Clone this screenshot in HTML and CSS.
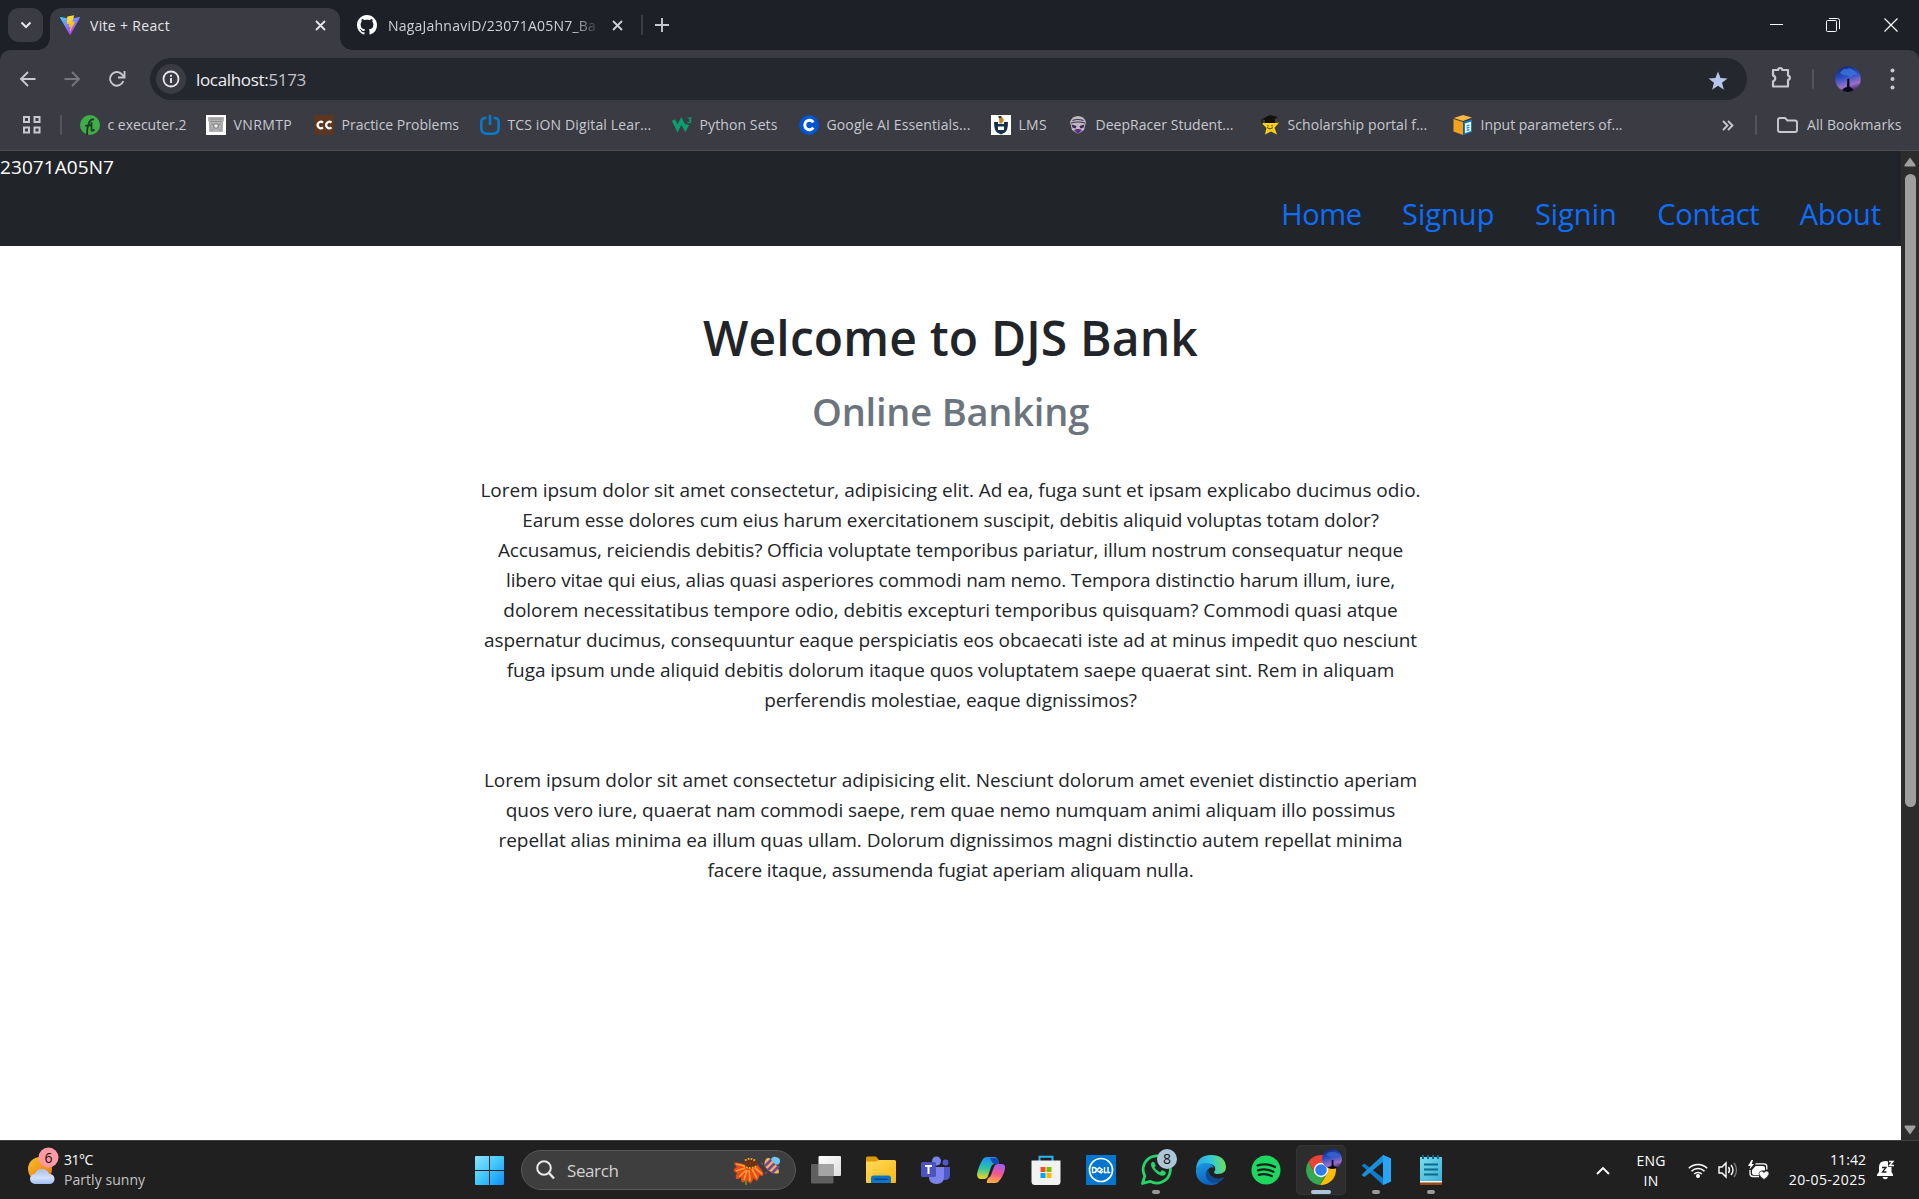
FILE: index.html
```html
<!DOCTYPE html>
<html lang="en">
<head>
<meta charset="utf-8">
<title>Vite + React</title>
<link rel="stylesheet" href="styles.css">
</head>
<body>
<div class="tabstrip">
  <div class="tab-search"><svg width="12" height="8" viewBox="0 0 12 8"><path d="M1.500 1.500 6 6l4.500-4.500" fill="none" stroke="#e6e6e8" stroke-width="2"/></svg></div>
  <div class="tab active">
    <svg width="20" height="20" viewBox="0 0 20 20"><defs><linearGradient id="va" x1="0" y1="0" x2=".6" y2="1"><stop offset="0" stop-color="#41d1ff"/><stop offset="1" stop-color="#bd34fe"/></linearGradient><linearGradient id="vb" x1=".4" y1="0" x2=".6" y2="1"><stop offset="0" stop-color="#ffea83"/><stop offset=".1" stop-color="#ffdd35"/><stop offset="1" stop-color="#ffa800"/></linearGradient></defs><path d="M19.800 3 10.600 19.500a.6.6 0 0 1-1 0L.2 3a.6.6 0 0 1 .6-.9l9.200 1.700 9.200-1.700a.6.6 0 0 1 .6.900z" fill="url(#va)"/><path d="m14.300.2-6.800 1.300a.3.300 0 0 0-.2.300l-.4 7c0 .2.200.3.300.3l1.900-.4c.2 0 .3.100.3.300l-.6 2.700c0 .2.100.4.300.3l1.200-.3c.2-.1.400.1.300.3l-.9 4.300c0 .3.300.4.500.2l4.700-9.500c.1-.2-.1-.4-.3-.4l-1.900.4c-.2 0-.3-.1-.3-.3l1.200-4.300z" fill="url(#vb)"/></svg>
    <span class="tab-title first">Vite + React</span>
    <svg class="x" width="11" height="11" viewBox="0 0 11 11"><path d="m1 1 9 9m0-9-9 9" stroke="#e6e6e8" stroke-width="1.800"/></svg>
  </div>
  <div class="tab">
    <svg width="20" height="20" viewBox="0 0 16 16"><path fill="#fff" d="M8 0C3.580 0 0 3.580 0 8c0 3.540 2.290 6.530 5.470 7.590.4.070.55-.17.55-.38 0-.19-.01-.82-.01-1.490-2.010.37-2.530-.49-2.690-.94-.09-.23-.48-.94-.82-1.130-.28-.15-.68-.52-.01-.53.63-.01 1.080.58 1.230.82.72 1.210 1.870.87 2.330.66.070-.52.28-.87.51-1.070-1.780-.2-3.640-.89-3.640-3.950 0-.87.31-1.590.82-2.150-.08-.2-.36-1.020.08-2.120 0 0 .67-.21 2.200.82.64-.18 1.320-.27 2-.27s1.360.09 2 .27c1.530-1.040 2.200-.82 2.200-.82.44 1.100.16 1.920.08 2.120.51.56.82 1.270.82 2.150 0 3.070-1.870 3.750-3.650 3.950.29.25.54.73.54 1.480 0 1.070-.01 1.930-.01 2.200 0 .21.15.46.55.38A8.010 8.010 0 0 0 16 8c0-4.420-3.580-8-8-8z"/></svg>
    <span class="tab-title second">NagaJahnaviD/23071A05N7_Ba</span>
    <svg class="x" width="11" height="11" viewBox="0 0 11 11"><path d="m1 1 9 9m0-9-9 9" stroke="#d0d0d4" stroke-width="1.800"/></svg>
  </div>
  <i class="tab-sep"></i>
  <svg class="plus" width="14" height="14" viewBox="0 0 14 14"><path d="M7 0v14M0 7h14" stroke="#c7c8d0" stroke-width="1.900"/></svg>
  <div class="win">
    <svg width="14" height="14" viewBox="0 0 14 14"><path d="M0 6.500h13" stroke="#fff" stroke-width="1"/></svg>
    <svg width="14" height="14" viewBox="0 0 14 14"><g fill="none" stroke="#fff"><rect x=".5" y="2.500" width="10" height="11" rx="1"/><path d="M3 .5h8.500a2 2 0 0 1 2 2V11"/></g></svg>
    <svg width="14" height="14" viewBox="0 0 14 14"><path d="m.5.5 13 13m0-13-13 13" stroke="#fff" stroke-width="1.200"/></svg>
  </div>
</div>

<div class="toolbar-wrap">
  <div class="toolbar">
    <svg class="t-back" width="20" height="20" viewBox="0 0 20 20"><path d="M17.500 10H3m7-7-7 7 7 7" fill="none" stroke="#c7c8d0" stroke-width="1.900"/></svg>
    <svg class="t-fwd" width="20" height="20" viewBox="0 0 20 20"><path d="M2.500 10H17m-7-7 7 7-7 7" fill="none" stroke="#75767f" stroke-width="1.900"/></svg>
    <svg class="t-load" width="20" height="20" viewBox="0 0 20 20"><path d="M16.300 12A6.800 6.800 0 1 1 15 5.400l1.800 2" fill="none" stroke="#c7c8d0" stroke-width="1.900"/><path d="M17.500 2v6.500H11" fill="none" stroke="#c7c8d0" stroke-width="1.900"/></svg>
    <div class="omnibox">
      <span class="chip"><svg width="18" height="18" viewBox="0 0 18 18"><circle cx="9" cy="9" r="7.500" fill="none" stroke="#e6e6e8" stroke-width="1.800"/><path d="M9 8v5M9 4.800v2" stroke="#e6e6e8" stroke-width="1.900"/></svg></span>
      <span class="url"><b>localhost:</b>5173</span>
      <svg class="star" width="20" height="20" viewBox="0 0 20 20"><path fill="#b6c6ea" d="m10 .5 2.500 6.600 7 .3-5.500 4.400 1.900 6.900L10 14.800l-5.900 3.900L6 11.800.5 7.400l7-.3z"/></svg>
    </div>
    <svg class="ext" width="23" height="24" viewBox="0 0 23 24"><path d="M3 5h5.200a2 2 0 0 1 4 0H18v5.500a2.300 2.300 0 0 1 0 4.500v6.500H3v-5.300a3 3 0 0 0 0-5.800z" fill="none" stroke="#c7c8d0" stroke-width="2.200" stroke-linejoin="round"/></svg>
    <i class="sep"></i>
    <svg class="avatar" width="26" height="26" viewBox="0 0 26 26"><defs><linearGradient id="av" x1=".3" y1="0" x2=".6" y2="1"><stop offset="0" stop-color="#10257a"/><stop offset=".4" stop-color="#2a50c4"/><stop offset=".75" stop-color="#9a70c8"/><stop offset="1" stop-color="#3a2060"/></linearGradient></defs><circle cx="13" cy="13" r="12.800" fill="url(#av)"/><path d="M5 7q3-5 7-4 3-2 6 1 4 2 4 5-4-1-5 1-4 2-5-1-4 1-7-2z" fill="#3f7ce6" opacity=".7"/><path d="M7 24q3-3 5-3l.3-8 2-.5.3 8.500q2 0 4 3-6 4-11.600 0z" fill="#0a0818"/></svg>
    <svg class="dots" width="5" height="22" viewBox="0 0 5 22"><g fill="#c7c8d0"><circle cx="2.500" cy="2.500" r="2"/><circle cx="2.500" cy="11" r="2"/><circle cx="2.500" cy="19.500" r="2"/></g></svg>
  </div>
  <div class="bookmarks">
    <svg class="apps" width="20" height="20" viewBox="0 0 20 20"><g fill="none" stroke="#c7c8d0" stroke-width="2"><path d="M2 2h5v5H2zM12.500 2h5v5h-5zM2 12.500h5v5H2zM12.500 12.500h5v5h-5z"/></g></svg>
    <i class="sep"></i>
    <div class="marks">
      <div class="bm"><svg width="20" height="20" viewBox="0 0 20 20"><circle cx="10" cy="10" r="10" fill="#3fae49"/><path d="M7 20q0-7 1.500-11 1.500-5 5.500-4.500M5 10.500q4 1 7-1.500M11.500 7v8q0 2 3-.5" stroke="#1d3a25" stroke-width="1.800" fill="none"/></svg><span>c executer.2</span></div>
      <div class="bm"><svg width="20" height="20" viewBox="0 0 20 20"><path d="M0 0h20v20H0z" fill="#fff"/><path d="M2 2h16v4l-1 1v10H3V7L2 6z" fill="#b4b4b4"/><path d="M4 4h12M4 6.500h12M5 9h2v6H5zM13 9h2v6h-2z" stroke="#8a8a8a" fill="#ddd"/><circle cx="10" cy="11" r="2.300" fill="#eee" stroke="#777"/></svg><span>VNRMTP</span></div>
      <div class="bm"><svg width="20" height="20" viewBox="0 0 20 20"><path d="M0 0h20v20H0z" fill="#5b3620"/><path d="M9 7.600A3.200 3.200 0 1 0 9 12.400M17.500 7.600a3.200 3.200 0 1 0 0 4.800" fill="none" stroke="#fff" stroke-width="2.200"/></svg><span>Practice Problems</span></div>
      <div class="bm"><svg width="20" height="20" viewBox="0 0 20 20"><path d="M6.500 3H5.500Q1.300 3 1.300 7v6q0 5.700 5.700 5.700h6q5.700 0 5.700-5.700V7q0-4-4.200-4h-1" fill="none" stroke="#0a79c8" stroke-width="2.600"/><path d="M10 0v10" stroke="#0a79c8" stroke-width="2.600"/></svg><span>TCS iON Digital Lear...</span></div>
      <div class="bm"><svg width="20" height="20" viewBox="0 0 20 20"><path d="M1.500 5 5.500 13.500 9.300 6l4 7.500 2.200-4" fill="none" stroke="#0aa06e" stroke-width="3.600"/><path d="M15.500 3H19l-1.500 2q2 .3 1 2-1 1-3 .3" fill="none" stroke="#0aa06e" stroke-width="1.200"/></svg><span>Python Sets</span></div>
      <div class="bm"><svg width="20" height="20" viewBox="0 0 20 20"><circle cx="10" cy="10" r="10" fill="#0056d2"/><path d="M14.300 7.300a4.700 4.700 0 1 0 0 5.400" fill="none" stroke="#fff" stroke-width="3"/></svg><span>Google AI Essentials...</span></div>
      <div class="bm"><svg width="20" height="20" viewBox="0 0 20 20"><path d="M0 0h20v20H0z" fill="#fff"/><path d="M3 7h4v2h6V7h4q0 8-3 10.500L10 19.500l-4-2Q3 15 3 7z" fill="#18304e"/><path d="M7 11.500h6V15H7z" fill="#fff"/><path d="m8 3 3-1 2 3-2 3.500H8.500z" fill="#c5841d"/><path d="M7.500 1h3v2h-3z" fill="#29384a"/></svg><span>LMS</span></div>
      <div class="bm"><svg width="20" height="20" viewBox="0 0 20 20"><path d="M2 7q2-6 8-6t8 6l-2 8-6 4-6-4z" fill="#bcb7c2"/><path d="M4.500 5.500q5-2 11 0M3 8q7-2 14 0" stroke="#40304f" stroke-width="1.200" fill="none"/><path d="m3.500 9.500 5 1.500-1 2.500-3-1zM16.500 9.500l-5 1.500 1 2.500 3-1z" fill="#3c2453"/><path d="M6 15l3-1h2l3 1-4 4z" fill="#5d2d87"/></svg><span>DeepRacer Student...</span></div>
      <div class="bm"><svg width="20" height="20" viewBox="0 0 20 20"><path d="m10 3 2.500 5 6.500-.3-4.500 5 2.500 6.800-6-3-6 3 1.500-6.500-5-5L8 8z" fill="#fcd116"/><path d="m2 4 8-4 8 2-8 5zM5 4.500h10V8H5z" fill="#14110d"/><path d="M2 4v5" stroke="#14110d"/><path d="M8 10v1.500m4-1.500v1.500m-5 1q3 3 6 0" stroke="#493b00" fill="none"/></svg><span>Scholarship portal f...</span></div>
      <div class="bm"><svg width="20" height="20" viewBox="0 0 20 20"><path d="m.5 4 9.500 3v13L.5 16.500z" fill="#f5a31c"/><path d="m10 0 9 2.500L10 6 .8 3z" fill="#f9b941"/><path d="m10.500 7 8.500-2.500V17l-8.500 3z" fill="#0d7fc4"/><path d="m12 8.500 6-1.800v9.200l-6 2.200z" fill="#fff"/><path d="m13.500 11 3-.8m-3 3 3-.8m-3 3 3-.8" stroke="#0d7fc4" stroke-width="1.200"/></svg><span>Input parameters of...</span></div>
    </div>
    <svg class="more" width="12" height="11" viewBox="0 0 12 11"><path d="m1 1 4.500 4.500L1 10m5-9 4.500 4.500L6 10" fill="none" stroke="#c7c8d0" stroke-width="1.800"/></svg>
    <i class="sep s2"></i>
    <svg class="folder" width="21" height="16" viewBox="0 0 21 16"><path d="M1 3q0-2 2-2h5l2.500 2.500H18q2 0 2 2V13q0 2-2 2H3q-2 0-2-2z" fill="none" stroke="#c7c8d0" stroke-width="1.900"/></svg>
    <span class="all">All Bookmarks</span>
  </div>
</div>

<div class="viewport">
  <div class="page">
    <header>
      <div class="roll">23071A05N7</div>
      <nav><a class="n1">Home</a><a class="n2">Signup</a><a class="n3">Signin</a><a class="n4">Contact</a><a class="n5">About</a></nav>
    </header>
    <main>
      <h1>Welcome to DJS Bank</h1>
      <h2>Online Banking</h2>
      <p class="p1">
        <span>Lorem ipsum dolor sit amet consectetur, adipisicing elit. Ad ea, fuga sunt et ipsam explicabo ducimus odio.</span>
        <span>Earum esse dolores cum eius harum exercitationem suscipit, debitis aliquid voluptas totam dolor?</span>
        <span>Accusamus, reiciendis debitis? Officia voluptate temporibus pariatur, illum nostrum consequatur neque</span>
        <span>libero vitae qui eius, alias quasi asperiores commodi nam nemo. Tempora distinctio harum illum, iure,</span>
        <span>dolorem necessitatibus tempore odio, debitis excepturi temporibus quisquam? Commodi quasi atque</span>
        <span>aspernatur ducimus, consequuntur eaque perspiciatis eos obcaecati iste ad at minus impedit quo nesciunt</span>
        <span>fuga ipsum unde aliquid debitis dolorum itaque quos voluptatem saepe quaerat sint. Rem in aliquam</span>
        <span>perferendis molestiae, eaque dignissimos?</span>
      </p>
      <p class="p2">
        <span>Lorem ipsum dolor sit amet consectetur adipisicing elit. Nesciunt dolorum amet eveniet distinctio aperiam</span>
        <span>quos vero iure, quaerat nam commodi saepe, rem quae nemo numquam animi aliquam illo possimus</span>
        <span>repellat alias minima ea illum quas ullam. Dolorum dignissimos magni distinctio autem repellat minima</span>
        <span>facere itaque, assumenda fugiat aperiam aliquam nulla.</span>
      </p>
    </main>
  </div>
  <div class="scrollbar">
    <svg width="12" height="10" viewBox="0 0 12 10"><path d="M6 .5 11.500 8q.5 1.500-1 1.500h-9Q0 9.500.5 8z" fill="#9f9f9f"/></svg>
    <i class="thumb"></i>
    <svg class="down" width="12" height="10" viewBox="0 0 12 10"><path d="M6 9.500.5 2Q0 .5 1.500.5h9q1.500 0 1 1.500z" fill="#9f9f9f"/></svg>
  </div>
</div>

<div class="taskbar">
  <div class="weather">
    <svg width="34" height="38" viewBox="0 0 34 38"><defs><linearGradient id="su" x1="0" y1="0" x2="1" y2="1"><stop offset="0" stop-color="#f5c02c"/><stop offset="1" stop-color="#f0700c"/></linearGradient><linearGradient id="cl" x1="0" y1="0" x2="0" y2="1"><stop offset="0" stop-color="#a9c0ee"/><stop offset=".6" stop-color="#d2e0fa"/><stop offset="1" stop-color="#9fbcf0"/></linearGradient></defs><circle cx="12" cy="22" r="12" fill="url(#su)"/><path d="M7 37a5 5 0 0 1 0-10q1.500-5 7-5t7 5a5 5 0 0 1 1 10z" fill="url(#cl)"/><circle cx="20.500" cy="10.500" r="10" fill="#ff99a4"/><text x="20.500" y="15.500" text-anchor="middle" font-size="14" fill="#111">6</text></svg>
    <div class="wt"><span class="deg">31°C</span><span class="desc">Partly sunny</span></div>
  </div>
  <div class="dock">
    <svg class="start" width="29" height="29" viewBox="0 0 29 29"><defs><linearGradient id="wn" gradientUnits="userSpaceOnUse" x1="0" y1="0" x2="29" y2="29"><stop offset="0" stop-color="#8fe3ff"/><stop offset=".5" stop-color="#41c6fb"/><stop offset="1" stop-color="#0a8ffa"/></linearGradient></defs><path fill="url(#wn)" d="M1 0h13v14H0V1q0-1 1-1zM15 0h13q1 0 1 1v13H15zM0 15h14v14H1q-1 0-1-1zM15 15h14v13q0 1-1 1H15z"/></svg>
    <div class="search">
      <svg width="19" height="20" viewBox="0 0 19 20"><circle cx="8" cy="8" r="6.800" fill="none" stroke="#e8e8e8" stroke-width="2"/><path d="m13 13 5 5.500" stroke="#e8e8e8" stroke-width="2.400"/></svg>
      <span>Search</span>
      <svg class="flower" width="48" height="30" viewBox="0 0 48 30"><path d="M13 22v7" stroke="#5e8a1e" stroke-width="2.200"/><path d="M1 6.500q4-.5 9 1.500l14 0 4 5q3 4 2 7-2 0-3.500-1-.5 4-2.500 6-2.500-1-3.500-3-1 4-3 5.500-3-1-4-4-2 3-4.500 3-1.500-2-1-5-3 2-5 1.500Q2 20 4 17q-3-.5-3.500-3Q2 11 4 11 1 9 1 6.500z" fill="#ea4c16"/><path d="M12 10 3 8m9 4-9 3m10-1-7 7m8-7-3 10m5-10 1 11m2-12 5 9m-3-11 8 7" stroke="#ff9a38" stroke-width="1.700"/><ellipse cx="17.500" cy="7.500" rx="7" ry="5" fill="#6d3313"/><path d="M10.500 9.500q6 5 14 0M12 4.500q5-3.500 10 0" fill="none" stroke="#f2b11e" stroke-width="1.800" stroke-dasharray="1.700 1.300"/><path d="M33 3q3-3 8 3t5 11q-5 2-11-3t-2-11z" fill="#f7b551"/><path d="m32 10 7-7M35 14l8-8M39 17l7-7" stroke="#73479b" stroke-width="2.600"/><path d="M38 4q1-4 5-3 5 1 4 5t-5 2z" fill="#6fc7f3"/><path d="m30 8-2-1m6 9-2 2" stroke="#73479b" stroke-width="1.500"/></svg>
    </div>
    <div class="apps-row">
      <div class="app"><svg width="30" height="30" viewBox="0 0 30 30"><defs><linearGradient id="tv" x1="0" y1="0" x2="1" y2="1"><stop offset="0" stop-color="#fff"/><stop offset="1" stop-color="#dedede"/></linearGradient></defs><rect x="7.500" y="1" width="22.500" height="20" rx="1" fill="url(#tv)"/><rect x="0" y="9" width="22.500" height="19.500" rx="1" fill="#6b6b6b" opacity=".85"/><path d="M7.500 9h15v12h-15z" fill="#a4a4a4"/></svg></div>
      <div class="app"><svg width="30" height="30" viewBox="0 0 30 30"><defs><linearGradient id="fo" x1="0" y1="0" x2="1" y2="1"><stop offset="0" stop-color="#ffdb5c"/><stop offset="1" stop-color="#fdb813"/></linearGradient></defs><path d="M0 3q0-1.500 1.500-1.500H10L13 5v5H0z" fill="#dc9a08"/><path d="M0 6.500h10L13 5h15.500q1.500 0 1.500 1.500V27q0 1-1 1H1q-1 0-1-1z" fill="url(#fo)"/><path d="M5 28v-5q0-2.500 2.500-2.500h15q2.500 0 2.500 2.500v5z" fill="#0a74c8"/><path d="M8.500 24.300h13" stroke="#05427c" stroke-width="1.300"/></svg></div>
      <div class="app"><svg width="30" height="30" viewBox="0 0 30 30"><circle cx="15.500" cy="6" r="4.500" fill="#7b83eb"/><circle cx="24.500" cy="7.500" r="3" fill="#5059c9"/><path d="M19 12h10v8q0 5-5 5t-5-4z" fill="#5059c9"/><path d="M8 12h15v10q0 7-7.500 7T8 22z" fill="#7b83eb"/><rect x="0" y="7" width="15" height="15" rx="1.500" fill="#4b53bc"/><path d="M4 11h7M7.500 11v8" stroke="#fff" stroke-width="2"/></svg></div>
      <div class="app"><svg width="30" height="30" viewBox="0 0 30 30"><defs><linearGradient id="c1" x1=".3" y1="0" x2=".2" y2="1"><stop offset="0" stop-color="#1a8ff5"/><stop offset=".5" stop-color="#2bc4a8"/><stop offset="1" stop-color="#f3d61c"/></linearGradient><linearGradient id="c2" x1=".6" y1="0" x2=".4" y2="1"><stop offset="0" stop-color="#a25bf0"/><stop offset=".5" stop-color="#f2568c"/><stop offset="1" stop-color="#ffb03b"/></linearGradient></defs><path d="M7 4q1-2 4-2h8q2 0 3 3l1 4h-4q-3 0-4 3l-3 9q-1 3-4 3H5q-4 0-4-5 2-9 6-15z" fill="url(#c1)"/><path d="M23 26q-1 2-4 2h-7q-2 0-1-2l1-3q2 0 3-3l3-8q1-3 4-3h3q5 0 4 5-2 8-6 12z" fill="url(#c2)"/><path d="M14 3h5q2 0 3 3l1 3h-5q-2-1-4-6z" fill="#1647b6"/></svg></div>
      <div class="app"><svg width="30" height="30" viewBox="0 0 30 30"><path d="M8.500 7V1.800h13V7" fill="none" stroke="#29b6f2" stroke-width="2"/><path d="M.5 5.500h29v21q0 3.500-3.500 3.500H4q-3.500 0-3.500-3.500z" fill="#f2f2f2"/><path d="M9.500 12h5v5h-5z" fill="#f25022"/><path d="M15.500 12h5v5h-5z" fill="#7fba00"/><path d="M9.500 18h5v5h-5z" fill="#00a4ef"/><path d="M15.500 18h5v5h-5z" fill="#ffb900"/></svg></div>
      <div class="app"><svg width="30" height="30" viewBox="0 0 30 30"><path d="M0 0h30v30H0z" fill="#0076ce"/><circle cx="15" cy="15" r="11.500" fill="none" stroke="#fff" stroke-width="1.700"/><g fill="none" stroke="#fff" stroke-width="1.400"><path d="M6.500 12.500v5h1.300q2.500 0 2.500-2.500t-2.500-2.500zM10.500 15l2.800-2.400 2.800 2-2.800 2.400zM12.500 16.700l2.700 1.200 2-1.600M18.500 12v5.500h2.300M22 12v5.500h2.300"/></g></svg></div>
      <div class="app run"><svg width="36" height="36" viewBox="0 0 36 36"><path d="M1.500 34.500 3.800 27A13.600 13.600 0 1 1 9 32.300z" fill="none" stroke="#25d366" stroke-width="2.800" stroke-linejoin="round"/><path d="M10.300 14q1.500-2 2.800-.8l1.600 3q.3.800-1.200 2.300 2 3.500 5.500 4.700l1.500-1.700q.5-.5 1.200-.2l3 1.600q.6 2.500-2.100 3.600-3.500 1-8.500-3.700-5.200-5-3.800-8.800z" fill="#25d366"/><circle cx="26" cy="10" r="10" fill="#aec5d8"/><text x="26" y="15" text-anchor="middle" font-size="14" fill="#111">8</text></svg></div>
      <div class="app"><svg width="30" height="30" viewBox="0 0 30 30"><defs><linearGradient id="e1" x1="0" y1=".3" x2="1" y2=".2"><stop offset="0" stop-color="#2fa8ea"/><stop offset=".5" stop-color="#32c8d8"/><stop offset="1" stop-color="#76e04e"/></linearGradient><linearGradient id="e2" x1="0" y1="0" x2=".4" y2="1"><stop offset="0" stop-color="#1a9be0"/><stop offset="1" stop-color="#0c60c0"/></linearGradient></defs><path d="M0 14Q1 0 15 0q14 0 15 12 0 7-8 7-4 0-4-2 2-2 1-5-3-4-9-3Q4 9 0 14z" fill="url(#e1)"/><path d="M0 14q3-6 9-6 7 0 9 5-4-2-6.500 2-2 6 2 10 4 3 11 1-5 5-11 4Q-1 28 0 14z" fill="url(#e2)"/><path d="M12 14q-4 4-1 10 5 7 14 2 3-2 3-4-6 3-11 0-4-2-5-8z" fill="#114a8b"/></svg></div>
      <div class="app"><svg width="30" height="30" viewBox="0 0 30 30"><circle cx="15" cy="15" r="14.500" fill="#1ed760"/><path d="M6.500 10.500q9-3 17.500 1.500M7 15.300q8-2.300 15.500 1.500M7.800 19.800q7-1.800 13 1.300" fill="none" stroke="#17221b" stroke-width="2.300" stroke-linecap="round"/></svg></div>
      <div class="app run current"><svg width="36" height="36" viewBox="0 0 36 36"><path d="M28.500 14.500A15 15 0 0 1 14 36l7.500-12L15 14.500z" fill="#fbbc04"/><path d="M2.500 12.800A15 15 0 0 0 14 36l7-11.500L9 24.500z" fill="#34a853"/><path d="M2.500 12.800A15 15 0 0 1 28.500 14.500H15L9 24.500z" fill="#ea4335"/><circle cx="15" cy="21" r="7.200" fill="#fff"/><circle cx="15" cy="21" r="5.800" fill="#2f7bf0"/><circle cx="26" cy="10" r="10" fill="url(#av)"/><path d="M20 6q3-4 6-3 4-1 7 3-3 2-5 1-3 2-8-1z" fill="#3f7ce6" opacity=".5"/><path d="M21.500 18.500l4-1.500.3-6h1.500l.4 6 3.800 1.500q-5 2.500-10 0z" fill="#0a0818"/></svg></div>
      <div class="app run"><svg width="30" height="30" viewBox="0 0 30 30"><path d="M22 0 30 3.500v23L22 30 3.500 13 .5 10.500l3-2L22 23z" fill="#0f7ac6"/><path d="M22 7 3.500 22l-3-2L3.500 17 22 0z" fill="#1c8fdc"/><path d="M22 0l8 3.500v23L22 30z" fill="#2aa4f4"/></svg></div>
      <div class="app run"><svg width="30" height="30" viewBox="0 0 30 30"><defs><linearGradient id="np" x1="0" y1="0" x2="1" y2="1"><stop offset="0" stop-color="#78dcf0"/><stop offset="1" stop-color="#3cb0d4"/></linearGradient></defs><path d="M4 26h22v4H4z" fill="#9a4a10"/><path d="M4 24h22v3.500H4z" fill="#f3f3f3"/><path d="M4 2h22v24H4z" fill="url(#np)"/><path d="M7 0v4m5-4v4m5-4v4m5-4v4" stroke="#0d6a8a" stroke-width="2"/><path d="M8 9.500h14M8 14.500h14M8 19.500h14" stroke="#0d6a8a" stroke-width="1.800"/></svg></div>
    </div>
  </div>
  <div class="tray">
    <svg class="up" width="14" height="9" viewBox="0 0 14 9"><path d="m1 8 6-6 6 6" fill="none" stroke="#fff" stroke-width="1.900"/></svg>
    <div class="lang"><span>ENG</span><span>IN</span></div>
    <svg class="wifi" width="20" height="16" viewBox="0 0 20 16"><g fill="none" stroke="#fff" stroke-width="1.600"><path d="M.8 6.300a13 13 0 0 1 18.400 0M3.500 9.200a9.200 9.200 0 0 1 13 0M6.200 12a5.400 5.400 0 0 1 7.600 0"/></g><circle cx="10" cy="14" r="2" fill="#fff"/></svg>
    <svg class="vol" width="21" height="18" viewBox="0 0 21 18"><g fill="none" stroke="#fff" stroke-width="1.400"><path d="M1 6h3l4-4v14l-4-4H1zM10.500 6q2 3 0 6M13 4q4 5 0 10"/><path d="M16 2q5 7 0 14" stroke="#777"/></g></svg>
    <svg class="bat" width="22" height="20" viewBox="0 0 22 20"><path d="M7.500 6H15q2 0 2 2v2.500h-3l-2 1-1 3.500H6q-2 0-2-2V10z" fill="#fff"/><path d="M7.500 3.800H16q2.800 0 2.800 2.800v2.900M2 10v3.500q0 3 3 3h6" fill="none" stroke="#fff" stroke-width="1.300"/><path d="M3.500 0 0 6h2.500L1.500 9.500 6 4H3.800L5 0z" fill="#fff"/><path d="M16 19.500q-5-3.500-5-6 .5-3 3-2.500l2 1.500 2-1.500q3-.5 3 2.500 0 2.500-5 6z" fill="#fff" stroke="#1f1f1f" stroke-width=".6"/></svg>
    <div class="clock"><span>11:42</span><span>20-05-2025</span></div>
    <svg class="bell" width="18" height="20" viewBox="0 0 18 20"><path d="M0 16v-1.500L2 12V7q0-6 6.500-6 1.500 0 2.500.5V7h3.500v5l1.500 2.500V16z" fill="#fff"/><path d="M5.500 17h5.500q-.5 2.300-2.700 2.300T5.500 17z" fill="#fff"/><path d="M5 7.500h4L5.500 12h4" stroke="#1f1f1f" fill="none" stroke-width="1.300"/><path d="M12 1.500h4l-3.500 4H17" stroke="#fff" fill="none" stroke-width="1.400"/></svg>
  </div>
</div>
</body>
</html>
```
FILE: styles.css
```css
* { box-sizing: border-box; }
body {
  margin: 0;
  width: 1919px;
  height: 1199px;
  display: flex;
  flex-direction: column;
  overflow: hidden;
  font-family: "Open Sans", "Noto Sans", sans-serif;
  font-size: 14px;
  background: #1d2027;
}
svg { display: block; flex: none; }
i { flex: none; }

/* Tab strip */
.tabstrip { height: 50px; flex: none; display: flex; align-items: flex-start; padding: 8px 21px 0 8px; color: #d0d0d4; }
.tab-search { width: 35px; height: 34px; border-radius: 11px; background: #3a3b43; display: grid; place-items: center; }
.tab { display: flex; align-items: center; height: 42px; padding: 0 0 8px 17px; width: 285px; }
.tab.active {
  position: relative;
  width: 290px;
  margin-left: 7px;
  padding-left: 10px;
  background: #3a3b43;
  border-radius: 12px 12px 0 0;
  color: #e6e6e8;
}
.tab.active::before, .tab.active::after { content: ""; position: absolute; bottom: 0; width: 12px; height: 12px; }
.tab.active::before { left: -12px; background: radial-gradient(circle at 0 0, transparent 11.5px, #3a3b43 12px); }
.tab.active::after { right: -12px; background: radial-gradient(circle at 100% 0, transparent 11.5px, #3a3b43 12px); }
.tab-title { white-space: nowrap; overflow: hidden; margin-left: 10px; }
.tab-title.first { letter-spacing: .33px; width: 224px; }
.tab-title.second { letter-spacing: .22px; width: 208px; margin-left: 11px; -webkit-mask-image: linear-gradient(90deg, #000 185px, transparent 212px); }
.tab.active .x { margin-left: 1px; }
.tab .x { margin-left: 16px; }
.tab-sep { width: 2px; height: 20px; margin: 7px 0 0 16px; background: #3a3b43; }
.plus { margin: 10px 0 0 12px; }
.win { display: flex; gap: 44px; margin: 10px 0 0 auto; }
.win svg:first-child { margin-right: -2px; }

/* Toolbar */
.toolbar-wrap { flex: none; height: 101px; background: #3a3b43; border-radius: 10px 10px 0 0; border-bottom: 1px solid #4c4e52; }
.toolbar { height: 58px; padding: 0 24px 0 18px; display: flex; align-items: center; }
.toolbar > * { flex: none; }
.t-fwd { margin-left: 24px; }
.t-load { margin-left: 25px; }
.omnibox { width: 1597px; height: 42px; margin-left: 23px; border-radius: 21px; background: #24272e; display: flex; align-items: center; padding: 0 19px 0 6px; }
.chip { width: 30px; height: 30px; border-radius: 50%; background: #3a3b43; display: grid; place-items: center; }
.url { margin-left: 10px; font-size: 17px; letter-spacing: -.33px; color: #c3c4cb; }
.url b { font-weight: 400; color: #f0f0f2; }
.star { margin: 3px 0 0 auto; }
.ext { margin: 0 0 4px 23px; }
.sep { width: 2px; height: 20px; border-radius: 1px; background: #53545e; }
.toolbar .sep { margin-left: 19px; }
.avatar { margin-left: 21px; }
.dots { margin-left: 29px; }

.bookmarks { height: 34px; display: flex; align-items: center; padding: 0 17px 0 22px; color: #c7c8d0; }
.bookmarks .sep { margin-left: 18px; }
.bookmarks span { position: relative; top: -1px; }
.marks { display: grid; grid-template-columns: 126px 108px 166px 192px 127px 192px 77px 192px 193px 188px; margin-left: 18px; }
.bm { display: flex; align-items: center; gap: 7.5px; white-space: nowrap; }
.bm:nth-child(2) { letter-spacing: .4px; }
.bm:nth-child(4) { letter-spacing: .13px; }
.bm:nth-child(5) { letter-spacing: .1px; }
.bm:nth-child(6) { letter-spacing: .12px; }
.bm:nth-child(7) { letter-spacing: .3px; }
.bm:nth-child(8) { letter-spacing: .04px; }
.bm:nth-child(9) { letter-spacing: .09px; }
.more { margin-left: 81px; }
.bookmarks .s2 { margin-left: 21px; }
.folder { margin-left: 20px; }
.all { margin-left: 9px; letter-spacing: .09px; white-space: nowrap; }

/* Web page */
.viewport { flex: 1; display: flex; min-height: 0; }
.page { flex: 1; background: #fff; color: #212529; font-size: 19px; line-height: 30px; }
header { height: 95px; background: #212529; color: #fff; padding: 1px 20px 0 0; }
.roll { letter-spacing: .08px; }
nav { display: flex; justify-content: flex-end; gap: 40.5px; margin-top: 10px; font-size: 29px; line-height: 44px; color: #0d6efd; }
.n1 { letter-spacing: -.4px; }
.n4 { letter-spacing: -.3px; }
.n5 { letter-spacing: -.1px; }
main { padding-top: 62px; text-align: center; }
h1 { margin: 0; font-size: 48px; line-height: 60px; font-weight: 600; letter-spacing: .15px; }
h2 { margin: 19px 0 0; font-size: 38px; line-height: 48px; font-weight: 600; letter-spacing: -.2px; color: #6c757d; }
p { margin: 0; }
p span { display: block; white-space: nowrap; letter-spacing: -.09px; }
.p1 { margin-top: 40px; }
.p2 { margin-top: 50px; }
.p1 span:nth-child(1) { letter-spacing: -.02px; }
.p1 span:nth-child(4) { letter-spacing: -.115px; }
.p1 span:nth-child(5), .p1 span:nth-child(7), .p2 span:nth-child(1) { letter-spacing: -.05px; }
.p2 span:nth-child(3) { letter-spacing: -.07px; }
.p2 span:nth-child(4) { letter-spacing: -.115px; }

.scrollbar { width: 18px; background: #2c2c2c; display: flex; flex-direction: column; align-items: center; padding: 6px 0 5px; }
.thumb { width: 11px; height: 633px; margin-top: 7px; border-radius: 6px; background: #9f9f9f; }
.down { margin-top: auto; }

/* Taskbar */
.taskbar { flex: none; height: 59px; background: #202020; border-top: 1px solid #3f4142; display: grid; grid-template-columns: 475px 984px 1fr; color: #fff; }
.weather { display: flex; padding: 6px 0 0 28px; }
.wt { display: flex; flex-direction: column; margin: 3px 0 0 2px; line-height: 20px; }
.deg { letter-spacing: -.5px; }
.desc { color: #c4c4c4; letter-spacing: .05px; }
.dock { display: flex; align-items: flex-start; }
.start { margin-top: 15px; }
.search { width: 275px; height: 40px; margin: 9px 0 0 17px; border-radius: 20px; background: #3e3e3e; border: 1px solid #585858; display: flex; align-items: center; padding-left: 14px; font-size: 17px; letter-spacing: -.4px; color: #d2d2d2; }
.search span { margin-left: 12px; }
.flower { margin: 2px 0 0 115px; }
.apps-row { display: flex; gap: 5px; margin: 4px 0 0 5px; }
.app { width: 50px; height: 50px; border-radius: 5px; display: flex; justify-content: center; position: relative; padding-top: 10px; }
.app svg[width="36"] { margin: -6px 0 0 6px; }
.run::after { content: ""; position: absolute; left: 21px; bottom: 1px; width: 8px; height: 4px; border-radius: 2px; background: #999; }
.current { background: #2d2d2d; border: 1px solid #363636; padding-top: 9px; }
.current::after { left: 14px; bottom: 0; width: 20px; background: #aec5d8; }
.tray { display: flex; align-items: flex-start; line-height: 20px; }
.up { margin: 25px 0 0 137px; }
.lang { display: flex; flex-direction: column; align-items: center; width: 30px; margin: 10px 0 0 26px; letter-spacing: .15px; }
.wifi { margin: 21px 0 0 22px; }
.vol { margin: 20px 0 0 10px; }
.bat { margin: 19px 0 0 9px; }
.clock { width: 80px; display: flex; flex-direction: column; align-items: flex-end; margin: 9px 0 0 16px; letter-spacing: .42px; }
.clock span:first-child { letter-spacing: .05px; }
.bell { margin: 19px 0 0 11px; }
```
